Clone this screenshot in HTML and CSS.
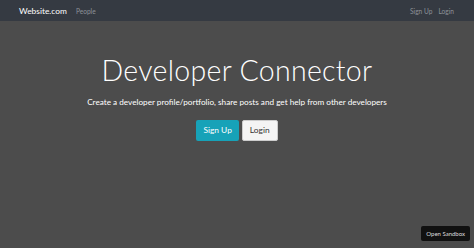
FILE: index.html
```html
<!DOCTYPE html>
<html lang="en">
<head>
    <meta charset="UTF-8">
    <meta name="viewport" content="width=device-width, initial-scale=1.0">
    <title>Developer Connector</title>
    <link rel="stylesheet" href="styles.css">
</head>
<body>

    <nav class="navbar">
        <div class="nav-left">
            <a href="#" class="brand">Website.com</a>
            <a href="#" class="nav-link">People</a>
        </div>
        <div class="nav-right">
            <a href="#" class="nav-link">Sign Up</a>
            <a href="#" class="nav-link">Login</a>
        </div>
    </nav>

    <section class="landing">
        <h1>Developer Connector</h1>
        <p class="lead">Create a developer profile/portfolio, share posts and get help from other developers</p>
        <div class="buttons">
            <a href="#" class="btn btn-primary">Sign Up</a>
            <a href="#" class="btn btn-light">Login</a>
        </div>
    </section>

    <a href="#" class="sandbox">Open Sandbox</a>

</body>
</html>
```

FILE: styles.css
```css
body {
    font-family: 'Lato', 'Open Sans', sans-serif;
    background: #4c4c4c;
    margin: 0;
    padding: 0;
    color: #fff;
    height: 248px;
    overflow: hidden;
}
a {
    text-decoration: none;
}
.navbar {
    display: flex;
    justify-content: space-between;
    align-items: center;
    height: 21px;
    padding: 0 20px 0 19px;
    background: #353a42;
}
.nav-left, .nav-right {
    display: flex;
    align-items: center;
    gap: 9px;
}
.brand {
    color: #fff;
    font-size: 8.4px;
}
.nav-link {
    color: #8d9299;
    font-size: 6.6px;
}
.nav-right {
    gap: 6px;
}
/* Landing */
.landing {
    display: flex;
    flex-direction: column;
    align-items: center;
    padding-top: 31px;
}
h1 {
    font-size: 28.5px;
    font-weight: 300;
    margin: 0;
    line-height: 36px;
    letter-spacing: 0.3px;
}
.lead {
    font-size: 8.2px;
    line-height: 11px;
    margin: 9px 0 0;
}
.buttons {
    display: flex;
    gap: 3px;
    margin-top: 12px;
}
.btn {
    display: inline-block;
    height: 21px;
    line-height: 21px;
    padding: 0 7px;
    border-radius: 2px;
    font-size: 8.4px;
}
.btn-primary {
    background: #17a2b8;
    color: #fff;
}
.btn-light {
    background: #f4f4f4;
    color: #333;
    border: 1px solid #ccc;
    height: 19px;
    line-height: 19px;
}
.sandbox {
    position: absolute;
    right: 4px;
    bottom: 7px;
    background: #111;
    color: #ddd;
    font-size: 6px;
    padding: 4px 5px;
    border-radius: 2px;
}
```
